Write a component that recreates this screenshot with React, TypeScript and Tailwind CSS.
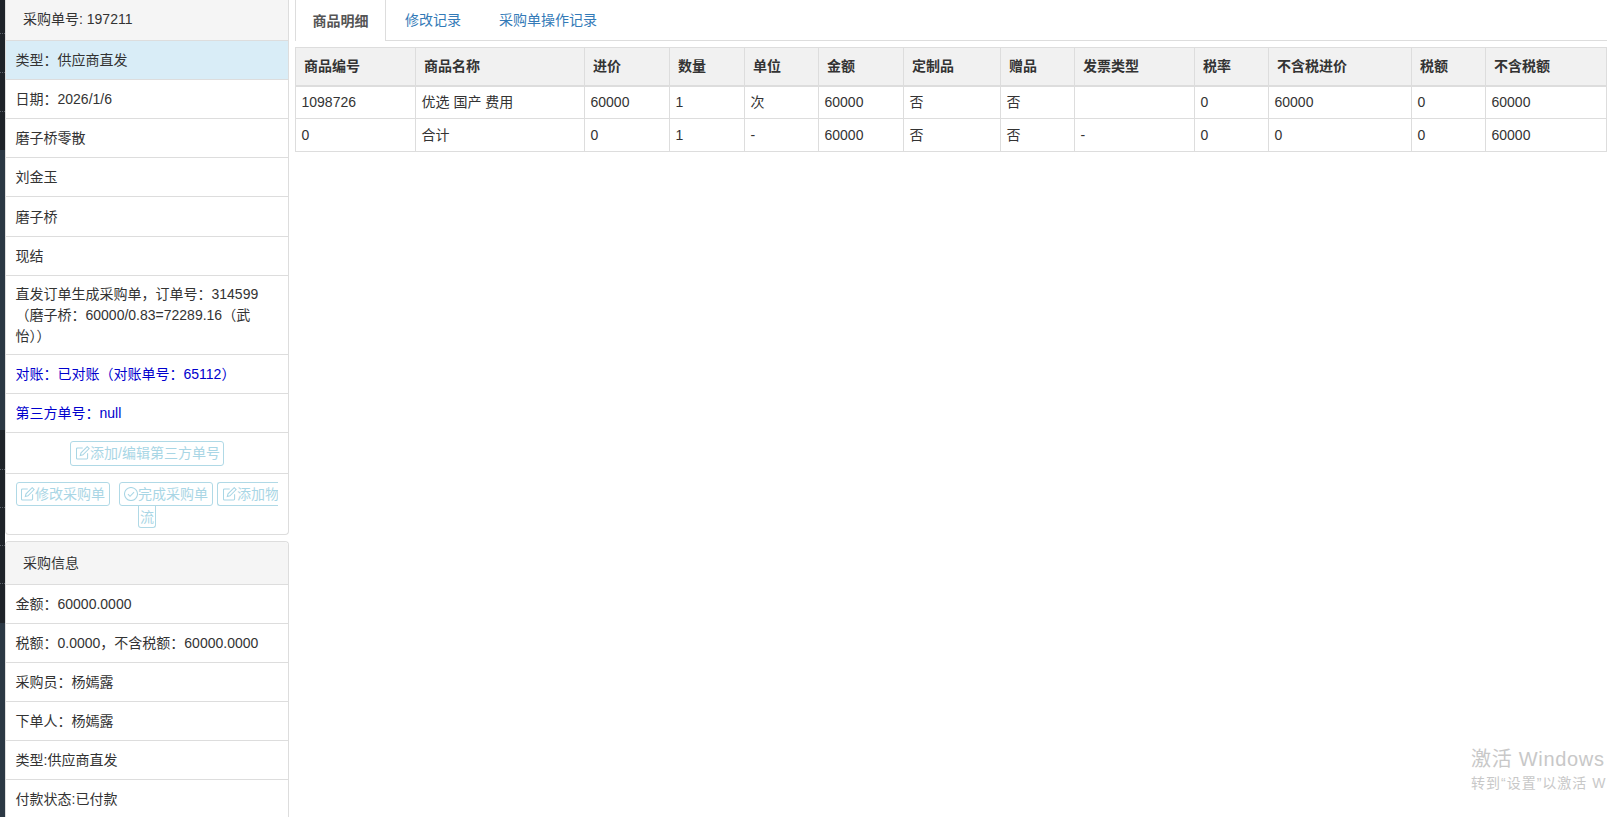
import React, { FC } from "react";

const PencilIcon: FC = () => (
  <svg viewBox="1 1 14.5 14.5" fill="none" stroke="#a9d6e5" strokeWidth="1.1" className="w-[14px] h-[14px] shrink-0">
    <path d="M13 8.5v5a1 1 0 0 1-1 1H2.5a1 1 0 0 1-1-1V4a1 1 0 0 1 1-1h5.5" />
    <path d="M5.5 10.8l.7-2.7L12.6 1.7l2 2-6.4 6.4z" />
  </svg>
);

const CheckIcon: FC = () => (
  <svg viewBox="0.7 0.7 14.6 14.6" fill="none" stroke="#a9d6e5" strokeWidth="1.1" className="w-[14px] h-[14px] shrink-0">
    <circle cx="8" cy="8" r="6.8" />
    <path d="M4.8 8.2l2.2 2.2 4.2-4.4" />
  </svg>
);

const Row: FC<{ children: React.ReactNode; className?: string }> = ({ children, className }) => (
  <div className={`min-h-[39px] px-[9.5px] flex items-center border-b border-[#dddddd] ${className ?? ""}`}>{children}</div>
);

const headers = ["商品编号", "商品名称", "进价", "数量", "单位", "金额", "定制品", "赠品", "发票类型", "税率", "不含税进价", "税额", "不含税额"];
const rows = [
  ["1098726", "优选 国产 费用", "60000", "1", "次", "60000", "否", "否", "", "0", "60000", "0", "60000"],
  ["0", "合计", "0", "1", "-", "60000", "否", "否", "-", "0", "0", "0", "60000"],
];
const widths = [
  "w-[120px]", "w-[169px]", "w-[85px]", "w-[75px]", "w-[74px]", "w-[85px]", "w-[97px]",
  "w-[74px]", "w-[120px]", "w-[74px]", "w-[143px]", "w-[74px]", "w-[121px]",
];

export default function App() {
  return (
    <div className="flex h-[817px] w-[1607px] overflow-hidden bg-white text-[14px] leading-[20px] text-[#333333] font-['Liberation_Sans','Noto_Sans_CJK_SC',sans-serif] relative">
      {/* sliver of the window behind */}
      <div className="w-[5px] shrink-0 flex flex-col">
        <div className="h-[150px] bg-[#1e2329] flex flex-col">
          <div className="h-[34px] border-b border-dotted border-[#5a6068]" />
          <div className="h-[39px] border-b border-dotted border-[#5a6068]" />
          <div className="h-[39px] border-b border-dotted border-[#5a6068]" />
        </div>
        <div className="h-[280px] bg-[#2b3844]" />
        <div className="h-[193px] bg-[#1e2329] flex flex-col">
          <div className="h-[40px] border-b border-dotted border-[#5a6068]" />
          <div className="h-[38px] border-b border-dotted border-[#5a6068]" />
          <div className="h-[38px] border-b border-dotted border-[#5a6068]" />
          <div className="h-[38px] border-b border-dotted border-[#5a6068]" />
        </div>
        <div className="flex-1 bg-[#2b3844]" />
      </div>
      <div className="w-[284px] shrink-0 flex flex-col">
        <div className="border border-t-0 border-[#dddddd] rounded-b-[4px]">
          <div className="h-[41px] pl-[17px] pb-[2px] flex items-center bg-[#f5f5f5] border-b border-[#dddddd]">采购单号: 197211</div>
          <Row className="bg-[#d9edf7]">类型：供应商直发</Row>
          <Row>日期：2026/1/6</Row>
          <Row>磨子桥零散</Row>
          <Row>刘金玉</Row>
          <Row className="min-h-[40px]">磨子桥</Row>
          <Row>现结</Row>
          <div className="pl-[9.5px] pr-[22px] h-[79px] pt-[8px] border-b border-[#dddddd] leading-[21px]">
            直发订单生成采购单，订单号：314599（磨子桥：60000/0.83=72289.16（武怡））
          </div>
          <Row className="text-[#0000cd]">对账：已对账（对账单号：65112）</Row>
          <Row className="text-[#0000cd]">第三方单号：null</Row>
          <div className="h-[41px] flex items-center justify-center border-b border-[#dddddd]">
            <span className="h-[25px] pl-[5px] pr-[3px] flex items-center border border-[#b0d9e6] rounded-[3px] text-[#a9d6e5]">
              <PencilIcon />添加/编辑第三方单号
            </span>
          </div>
          <div className="h-[60px] pl-[10px] pt-[8px] flex flex-col">
            <div className="flex w-[262px] overflow-hidden">
              <span className="h-[24px] shrink-0 px-[4px] flex items-center border border-[#b0d9e6] rounded-[3px] text-[#a9d6e5]"><PencilIcon />修改采购单</span>
              <span className="ml-[9px] h-[24px] shrink-0 px-[4px] flex items-center border border-[#b0d9e6] rounded-[3px] text-[#a9d6e5]"><CheckIcon />完成采购单</span>
              <span className="ml-[4px] h-[24px] shrink-0 pl-[5px] flex items-center border border-r-0 border-[#b0d9e6] rounded-l-[3px] text-[#a9d6e5]"><PencilIcon />添加物</span>
            </div>
            <span className="ml-[122px] w-[18px] h-[22px] flex items-center justify-center border border-t-0 border-[#b0d9e6] rounded-b-[3px] text-[#a9d6e5]">流</span>
          </div>
        </div>
        <div className="mt-[6px] border border-[#dddddd] rounded-t-[4px] border-b-0">
          <div className="h-[43px] pl-[17px] flex items-center bg-[#f5f5f5] border-b border-[#dddddd] rounded-t-[4px]">采购信息</div>
          <Row>金额：60000.0000</Row>
          <Row>税额：0.0000，不含税额：60000.0000</Row>
          <Row>采购员：杨嫣露</Row>
          <Row>下单人：杨嫣露</Row>
          <Row>类型:供应商直发</Row>
          <Row>付款状态:已付款</Row>
        </div>
      </div>
      <div className="flex-1 pl-[6px] min-w-0">
        <div className="flex h-[41px] border-b border-[#dddddd]">
          <div className="w-[91px] h-[41px] flex items-center justify-center border-x border-[#dddddd] bg-white font-bold text-[#555555]">商品明细</div>
          <div className="px-[19px] flex items-center text-[#337ab7]">修改记录</div>
          <div className="px-[19px] flex items-center text-[#337ab7]">采购单操作记录</div>
        </div>
        <table className="mt-[6px] table-fixed border-collapse w-[1311px]">
          <colgroup>
            {widths.map((w, i) => (
              <col key={i} className={w} />
            ))}
          </colgroup>
          <thead>
            <tr className="h-[38px] bg-[#f1f1f1]">
              {headers.map((h) => (
                <th key={h} className="border border-b-2 border-[#dddddd] pl-[8px] text-left font-bold">{h}</th>
              ))}
            </tr>
          </thead>
          <tbody>
            {rows.map((r, i) => (
              <tr key={i} className="h-[33px]">
                {r.map((c, j) => (
                  <td key={j} className="border border-[#dddddd] pl-[5.5px]">{c}</td>
                ))}
              </tr>
            ))}
          </tbody>
        </table>
      </div>
      {/* windows activation watermark, runs off the right edge */}
      <div className="absolute left-[1471px] top-[745px] text-[#c8c8c8] whitespace-nowrap">
        <div className="text-[20px] leading-[28px] tracking-[0.7px]">激活 Windows</div>
        <div className="text-[14px] leading-[20px] tracking-[1px]">转到“设置”以激活 W</div>
      </div>
    </div>
  );
}
